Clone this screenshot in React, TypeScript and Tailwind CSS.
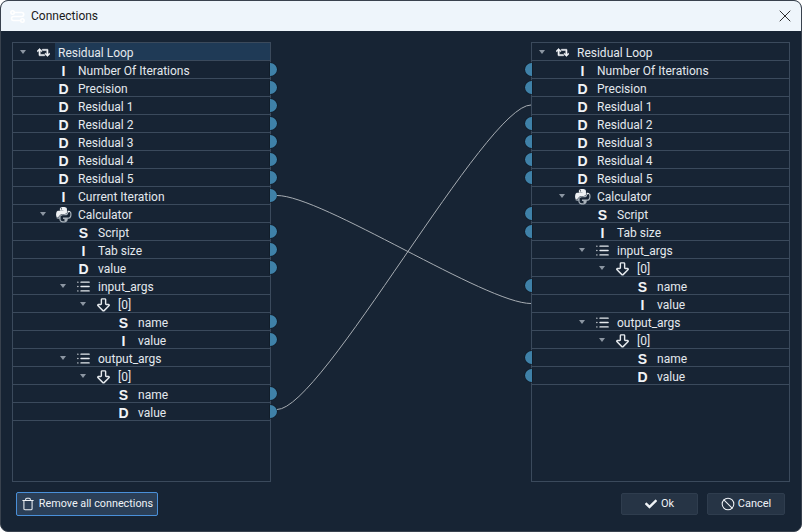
import React from 'react';
import { ArrowBigDown, Ban, List, Trash, X } from 'lucide-react';
import { FaCheck, FaPython, FaRetweet } from 'react-icons/fa';

type Row = {
  label: string;
  depth: number;
  type?: string;
  group?: 'loop' | 'python' | 'list' | 'item';
  dot?: boolean;
};

const leftRows: Row[] = [
  { label: 'Residual Loop', depth: 0, group: 'loop' },
  { label: 'Number Of Iterations', depth: 1, type: 'I', dot: true },
  { label: 'Precision', depth: 1, type: 'D', dot: true },
  { label: 'Residual 1', depth: 1, type: 'D', dot: true },
  { label: 'Residual 2', depth: 1, type: 'D', dot: true },
  { label: 'Residual 3', depth: 1, type: 'D', dot: true },
  { label: 'Residual 4', depth: 1, type: 'D', dot: true },
  { label: 'Residual 5', depth: 1, type: 'D', dot: true },
  { label: 'Current Iteration', depth: 1, type: 'I', dot: true },
  { label: 'Calculator', depth: 1, group: 'python' },
  { label: 'Script', depth: 2, type: 'S', dot: true },
  { label: 'Tab size', depth: 2, type: 'I', dot: true },
  { label: 'value', depth: 2, type: 'D', dot: true },
  { label: 'input_args', depth: 2, group: 'list' },
  { label: '[0]', depth: 3, group: 'item' },
  { label: 'name', depth: 4, type: 'S', dot: true },
  { label: 'value', depth: 4, type: 'I', dot: true },
  { label: 'output_args', depth: 2, group: 'list' },
  { label: '[0]', depth: 3, group: 'item' },
  { label: 'name', depth: 4, type: 'S', dot: true },
  { label: 'value', depth: 4, type: 'D', dot: true },
];

const rightRows: Row[] = [
  { label: 'Residual Loop', depth: 0, group: 'loop' },
  { label: 'Number Of Iterations', depth: 1, type: 'I', dot: true },
  { label: 'Precision', depth: 1, type: 'D', dot: true },
  { label: 'Residual 1', depth: 1, type: 'D' },
  { label: 'Residual 2', depth: 1, type: 'D', dot: true },
  { label: 'Residual 3', depth: 1, type: 'D', dot: true },
  { label: 'Residual 4', depth: 1, type: 'D', dot: true },
  { label: 'Residual 5', depth: 1, type: 'D', dot: true },
  { label: 'Calculator', depth: 1, group: 'python' },
  { label: 'Script', depth: 2, type: 'S', dot: true },
  { label: 'Tab size', depth: 2, type: 'I', dot: true },
  { label: 'input_args', depth: 2, group: 'list' },
  { label: '[0]', depth: 3, group: 'item' },
  { label: 'name', depth: 4, type: 'S', dot: true },
  { label: 'value', depth: 4, type: 'I' },
  { label: 'output_args', depth: 2, group: 'list' },
  { label: '[0]', depth: 3, group: 'item' },
  { label: 'name', depth: 4, type: 'S', dot: true },
  { label: 'value', depth: 4, type: 'D', dot: true },
];

const PythonIcon = () => (
  <span className="relative block h-[17px] w-[17px]">
    <FaPython className="absolute inset-0 h-[17px] w-[17px] text-[#eef1f4] [clip-path:polygon(0_0,100%_0,100%_30%,0_72%)]" />
    <FaPython
      className="absolute inset-0 h-[17px] w-[17px] text-[#a9b2bb] [clip-path:polygon(100%_30%,100%_100%,0_100%,0_72%)]"
      fill="none"
      stroke="currentColor"
      strokeWidth={36}
    />
  </span>
);

const GroupIcon = ({ group }: { group: NonNullable<Row['group']> }) => {
  if (group === 'loop') {
    return <FaRetweet className="h-[13px] w-[13px] text-[#f2f5f8]" stroke="currentColor" strokeWidth={24} />;
  }
  if (group === 'python') return <PythonIcon />;
  if (group === 'list') return <List className="h-[15px] w-[15px] text-[#e6eaee]" strokeWidth={2.2} />;
  return <ArrowBigDown className="h-[17px] w-[17px] text-[#e6eaee]" strokeWidth={2} />;
};

const TreeRow = ({ row, side, selected }: { row: Row; side: 'left' | 'right'; selected?: boolean }) => {
  const indent = row.depth * 20;
  return (
    <div className="relative flex h-[18px] shrink-0 items-center border-b border-[#3b4a5c]">
      <div style={{ width: indent }} className="shrink-0" />
      <div className="flex h-full w-[20px] shrink-0 items-center justify-center">
        {row.group && (
          <span className="h-0 w-0 border-x-[3.5px] border-t-[4px] border-x-transparent border-t-[#8c96a2]" />
        )}
      </div>
      <div className="flex h-full w-[20px] shrink-0 items-center justify-center pl-[1px] pt-[2px]">
        {row.group && <GroupIcon group={row.group} />}
        {row.type && (
          <span className="font-['Liberation_Sans',sans-serif] text-[14px] font-bold leading-none text-[#f1f4f7]">
            {row.type}
          </span>
        )}
      </div>
      <span
        className={`ml-[2px] flex h-full flex-1 items-center pl-[3px] pt-[3px] text-[12px] text-[#e4e9ee] ${
          selected ? 'bg-[#1f3a56]' : ''
        }`}
      >
        {row.label}
      </span>
      {row.dot && (
        <span
          className={
            side === 'left'
              ? 'absolute right-[-7px] top-[2px] h-[13px] w-[7px] rounded-r-full bg-[#3f81a8] shadow-[0_0_0_0.5px_#0d1620]'
              : 'absolute left-[-7px] top-[2px] h-[13px] w-[7px] rounded-l-full bg-[#3f81a8] shadow-[0_0_0_0.5px_#0d1620]'
          }
        />
      )}
    </div>
  );
};

const Tree = ({ rows, side }: { rows: Row[]; side: 'left' | 'right' }) => (
  <div className="flex h-[440px] w-[259px] flex-col border border-[#3b4a5c]">
    {rows.map((row, i) => (
      <TreeRow key={i} row={row} side={side} selected={side === 'left' && i === 0} />
    ))}
  </div>
);

export default function App() {
  return (
    <div className="h-[532px] w-[802px] bg-white font-['Roboto',sans-serif]">
      <div className="relative flex h-full flex-col overflow-hidden rounded-[8px] border border-[#39424e] bg-[#172434]">
        <div className="flex h-[30px] shrink-0 items-center bg-[#eef5fb] pl-[9px] pr-[6px]">
          <svg width="15" height="15" viewBox="0 0 15 15" fill="none" stroke="#ffffff" strokeWidth="1.6" strokeLinecap="round">
            <circle cx="2.6" cy="3.5" r="1.7" />
            <path d="M4.5 3.5h7.2a2 2 0 0 1 0 4H3.5a2 2 0 0 0 0 4h7" />
            <circle cx="12.4" cy="11.5" r="1.7" />
          </svg>
          <span className="ml-[6px] text-[12px] text-[#1a1a1a]">Connections</span>
          <X className="ml-auto h-[20px] w-[20px] text-[#1a1a1a]" strokeWidth={1.1} />
        </div>

        <div className="flex justify-between pl-[11px] pr-[11px] pt-[11px]">
          <Tree rows={leftRows} side="left" />
          <Tree rows={rightRows} side="right" />
        </div>

        <div className="flex flex-1 items-start justify-between pl-[15px] pr-[16px] pt-[10px]">
          <button className="flex h-[24px] w-[142px] items-center justify-center gap-[4px] whitespace-nowrap rounded-[2px] border border-[#4a90d9] bg-[#2b3f57] text-[10.8px] text-[#eef2f6]">
            <Trash className="h-[14px] w-[14px] shrink-0" strokeWidth={1.8} />
            Remove all connections
          </button>
          <div className="flex gap-[9px] pt-[1px]">
            <button className="flex h-[22px] w-[77px] items-center justify-center gap-[4px] rounded-[2px] border border-[#2f3d4e] bg-[#263445] text-[11px] text-[#eef2f6]">
              <FaCheck className="h-[12px] w-[12px]" />
              Ok
            </button>
            <button className="flex h-[22px] w-[78px] items-center justify-center gap-[3px] rounded-[2px] border border-[#2f3d4e] bg-[#263445] text-[11px] text-[#eef2f6]">
              <Ban className="h-[14px] w-[14px]" strokeWidth={1.8} />
              Cancel
            </button>
          </div>
        </div>

        <svg className="pointer-events-none absolute left-[-1px] top-[-1px]" width="802" height="532" fill="none" stroke="#a7adb3" strokeWidth="1">
          <path d="M277 195.5 C322 195.5 486 303.5 531 303.5" />
          <path d="M277 409.5 C322 409.5 486 105 531 105" />
        </svg>
      </div>
    </div>
  );
}
